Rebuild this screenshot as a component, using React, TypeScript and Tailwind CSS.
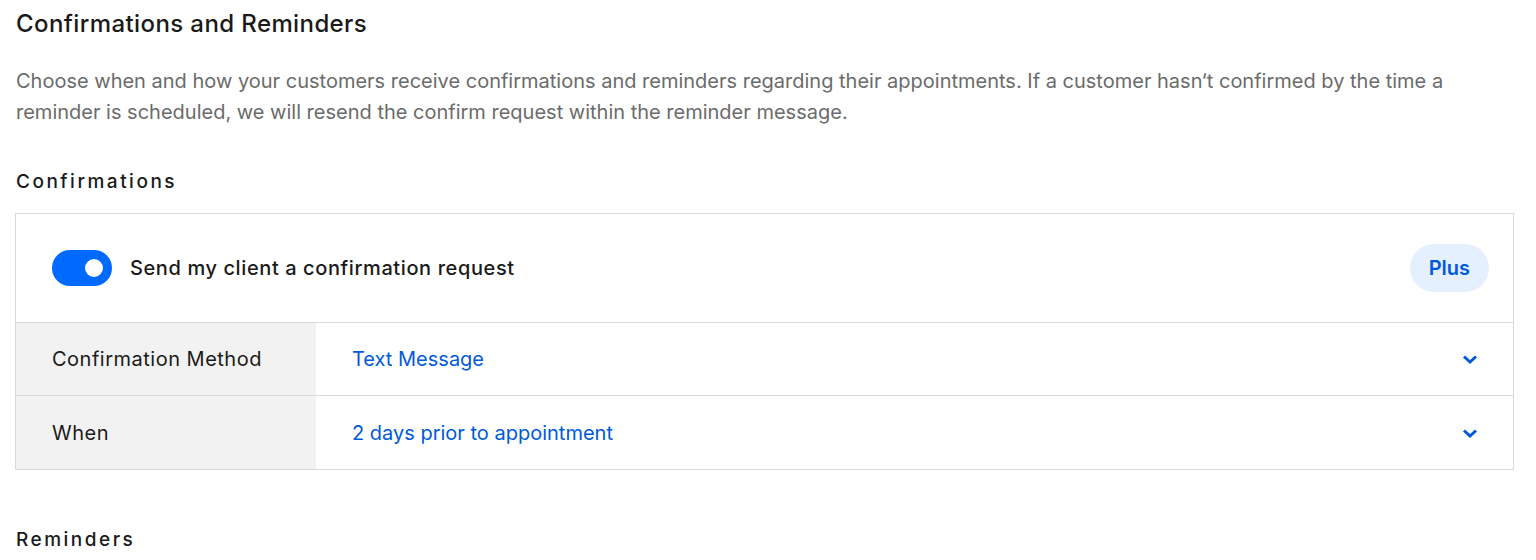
import React from "react";

function Chevron() {
  return (
    <svg width="18" height="18" viewBox="0 0 18 18" fill="none">
      <path d="M3 6.5 L9 12 L15 6.5" stroke="#005ad9" strokeWidth="3" strokeLinecap="butt" strokeLinejoin="miter" />
    </svg>
  );
}

function Row({ label, value, last }: { label: string; value: string; last?: boolean }) {
  return (
    <div className={`flex h-[73px] ${last ? "" : "border-b border-[#d9d9d9]"}`}>
      <div className="w-[300px] shrink-0 bg-[#f2f2f2] flex items-center pl-[36px] text-[20px] tracking-[0.5px] text-[#1a1a1a]">
        {label}
      </div>
      <div className="flex-1 flex items-center justify-between pl-[36px] pr-[34px] text-[20px] text-[#005ad9]">
        <span>{value}</span>
        <Chevron />
      </div>
    </div>
  );
}

export default function App() {
  return (
    <div className="bg-white w-[1536px] h-[560px] overflow-hidden px-[16px] pt-[8px] font-['Inter',sans-serif]">
      <h1 className="text-[24px] leading-[32px] font-medium text-[#1a1a1a] tracking-[0.4px]">
        Confirmations and Reminders
      </h1>
      <p className="mt-[26px] text-[20px] leading-[31px] text-[#6b6b6b] pr-[40px]">
        Choose when and how your customers receive confirmations and reminders regarding their appointments. If a customer hasn‘t confirmed by the time a reminder is scheduled, we will resend the confirm request within the reminder message.
      </p>
      <h2 className="mt-[42px] text-[19px] leading-[24px] font-medium text-[#1a1a1a] tracking-[2.5px]">
        Confirmations
      </h2>
      <div className="mt-[19px] -ml-px mr-[6px] border border-[#d9d9d9]">
        <div className="h-[109px] flex items-center justify-between pl-[36px] pr-[24px] border-b border-[#d9d9d9]">
          <div className="flex items-center gap-[18px]">
            <div className="w-[60px] h-[36px] rounded-full bg-[#006aff] flex items-center justify-end pr-[9px]">
              <div className="w-[18px] h-[18px] rounded-full bg-white" />
            </div>
            <span className="text-[20px] font-medium tracking-[0.6px] text-[#1a1a1a]">Send my client a confirmation request</span>
          </div>
          <div className="h-[48px] px-[19px] rounded-full bg-[#e5f0ff] flex items-center text-[20px] font-semibold text-[#005ad9]">
            Plus
          </div>
        </div>
        <Row label="Confirmation Method" value="Text Message" />
        <Row label="When" value="2 days prior to appointment" last />
      </div>
      <h2 className="mt-[58px] text-[19px] leading-[24px] font-medium text-[#1a1a1a] tracking-[2.5px]">
        Reminders
      </h2>
    </div>
  );
}
